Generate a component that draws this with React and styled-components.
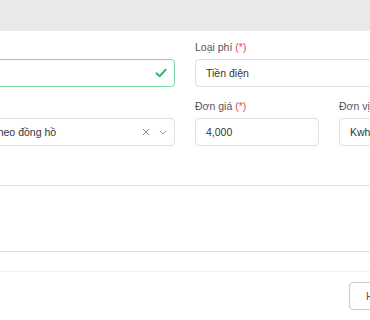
import React from "react";
import styled, { createGlobalStyle } from "styled-components";

const GlobalStyle = createGlobalStyle`
  html, body {
    margin: 0;
    padding: 0;
    background: #fff;
    font-family: "Liberation Sans", Arial, sans-serif;
    overflow: hidden;
  }
  * {
    box-sizing: border-box;
  }
`;

function CheckIcon() {
  return (
    <svg width="12" height="10" viewBox="0 0 12 10" fill="none">
      <path d="M1.5 5.2 L4.6 8.2 L10.6 1.8" stroke="#2dbd6e" strokeWidth="2" strokeLinecap="round" strokeLinejoin="round" />
    </svg>
  );
}

function ClearIcon() {
  return (
    <svg width="8" height="8" viewBox="0 0 8 8" fill="none">
      <path d="M1.2 1.2 L6.8 6.8 M6.8 1.2 L1.2 6.8" stroke="#8a8a8a" strokeWidth="1" strokeLinecap="round" />
    </svg>
  );
}

function ChevronIcon() {
  return (
    <svg width="8" height="5" viewBox="0 0 8 5" fill="none">
      <path d="M1 1 L4 4 L7 1" stroke="#999" strokeWidth="1" strokeLinecap="round" strokeLinejoin="round" />
    </svg>
  );
}

function App() {
  return (
    <Modal>
      <GlobalStyle />
      <Header />
      <Body>
        <FormGrid>
          <Field span="1 / 2">
            <Label>Mã</Label>
            <Input valid>
              <Value>P101</Value>
              <Icons>
                <CheckIcon />
              </Icons>
            </Input>
          </Field>
          <Field span="2 / 4">
            <Label>Loại phí <Req>(*)</Req></Label>
            <Input>
              <Value>Tiền điện</Value>
            </Input>
          </Field>
          <Field span="1 / 2">
            <Label>Cách tính</Label>
            <Input>
              <Value>Tính tiền theo đồng hồ</Value>
              <Icons>
                <ClearIcon />
                <ChevronIcon />
              </Icons>
            </Input>
          </Field>
          <Field span="2 / 3">
            <Label>Đơn giá <Req>(*)</Req></Label>
            <Input>
              <Value>4,000</Value>
            </Input>
          </Field>
          <Field span="3 / 4">
            <Label>Đơn vị</Label>
            <Input>
              <Value>Kwh</Value>
            </Input>
          </Field>
        </FormGrid>
        <Note />
      </Body>
      <Footer>
        <Button>Hủy</Button>
        <Button primary>Lưu</Button>
      </Footer>
    </Modal>
  );
}

export default App;

// css
const Modal = styled.div`
  width: 370px;
  height: 320px;
  overflow: hidden;
  background: #fff;
`;
const Header = styled.div`
  height: 31px;
  background: #e9e9e9;
`;
const Body = styled.div`
  padding: 8px 0 19px;
`;
const FormGrid = styled.div`
  display: grid;
  grid-template-columns: 235px 124px 160px;
  column-gap: 20px;
  row-gap: 11px;
  margin-left: -60px;
`;
const Field = styled.div`
  grid-column: ${(p) => p.span};
  display: flex;
  flex-direction: column;
`;
const Label = styled.label`
  font-size: 10.5px;
  line-height: 16px;
  height: 16px;
  margin-bottom: 4px;
  color: #555;
  white-space: nowrap;
`;
const Req = styled.span`
  color: #e5484d;
`;
const Input = styled.div`
  height: 28px;
  display: flex;
  align-items: center;
  padding: 0 10px;
  border: 1px solid ${(p) => (p.valid ? "#7ddaa4" : "#dcdfe4")};
  border-radius: 4px;
  background: #fff;
`;
const Value = styled.span`
  flex: 1;
  font-size: 10.5px;
  color: #333;
  white-space: nowrap;
  overflow: hidden;
`;
const Icons = styled.span`
  display: flex;
  align-items: center;
  gap: 9px;
  margin-right: -3px;
`;
const Note = styled.div`
  height: 67px;
  margin: 39px -20px 0;
  border: 1px solid #e0e0e0;
  border-radius: 4px;
`;
const Footer = styled.div`
  display: flex;
  justify-content: flex-end;
  gap: 8px;
  padding: 10px 16px;
  margin-right: -131px;
  border-top: 1px solid #f0f0f0;
`;
const Button = styled.button`
  width: 64px;
  height: 28px;
  border: 1px solid ${(p) => (p.primary ? "#1f8cf0" : "#c8c8c8")};
  border-radius: 4px;
  background: ${(p) => (p.primary ? "#1f8cf0" : "#fff")};
  color: ${(p) => (p.primary ? "#fff" : "#555")};
  font-family: "Liberation Sans", Arial, sans-serif;
  font-size: 10.5px;
  text-align: left;
  padding: 0 16px;
`;
